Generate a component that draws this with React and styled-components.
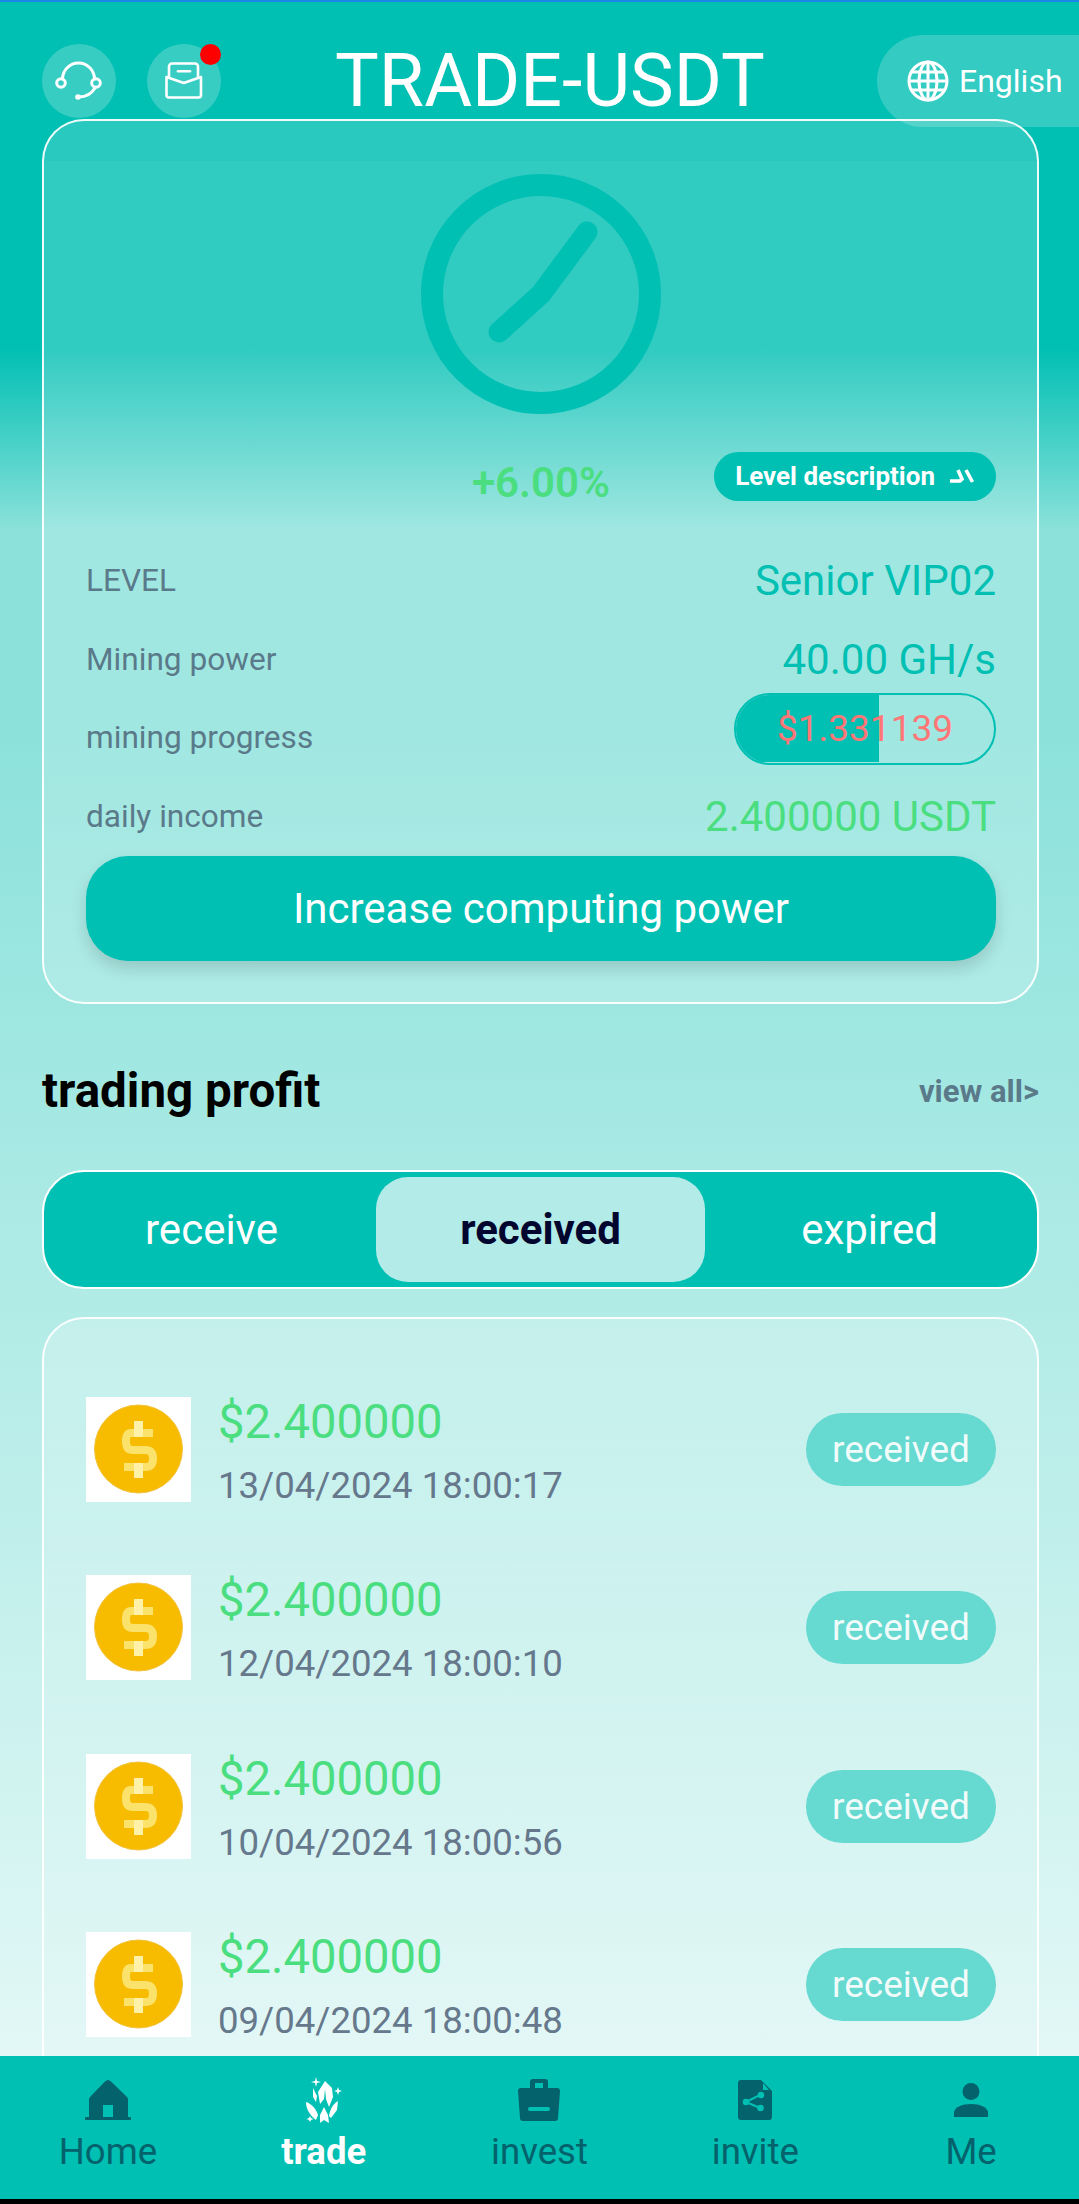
import React from "react";
import styled, { createGlobalStyle } from "styled-components";

const Global = createGlobalStyle`
  html, body { margin: 0; padding: 0; background: #000; }
  * { box-sizing: border-box; }
  body { font-family: Roboto, "Liberation Sans", sans-serif; }
`;

const Page = styled.div`
  position: relative;
  width: 1079px;
  height: 2204px;
  overflow: hidden;
  display: flex;
  flex-direction: column;
  background: linear-gradient(180deg, #00bfb3 0, #00bfb3 345px, #8ce2db 530px, #8ce2db 735px, #ffffff 2490px);
  border-top: 2px solid #1a86e8;
`;

const Scroll = styled.main`
  flex: 1;
  min-height: 0;
  overflow: hidden;
  padding: 0 40px 0 42px;
`;

const Header = styled.header`
  height: 117px;
  display: flex;
  align-items: flex-start;
  padding-top: 42px;
`;

const IconRound = styled.div`
  position: relative;
  width: 74px;
  height: 74px;
  border-radius: 50%;
  background: rgba(255, 255, 255, 0.22);
  margin-right: 31px;
  flex: none;
  svg { display: block; }
`;

const Dot = styled.span`
  position: absolute;
  top: 0;
  right: 0;
  width: 21px;
  height: 21px;
  border-radius: 50%;
  background: #ff0000;
`;

const Title = styled.h1`
  margin: -5px 0 0 83px;
  font-size: 73.5px;
  line-height: 84px;
  font-weight: 400;
  color: #fff;
  white-space: nowrap;
`;

const Lang = styled.div`
  position: absolute;
  left: 877px;
  top: 33px;
  width: 260px;
  height: 92px;
  border-radius: 46px;
  background: rgba(255, 255, 255, 0.2);
  display: flex;
  align-items: center;
  gap: 10px;
  padding-left: 30px;
  color: #fff;
  font-size: 32px;
`;

const GlassCard = styled.section`
  border: 2px solid rgba(255, 255, 255, 0.92);
  border-radius: 42px;
`;

const MineCard = styled(GlassCard)`
  height: 885px;
  padding: 53px 41px 0 42px;
  background: linear-gradient(180deg, rgba(255, 255, 255, 0.165) 0, rgba(255, 255, 255, 0.165) 40px, rgba(255, 255, 255, 0.19) 40px);
`;

const Gauge = styled.svg`
  display: block;
  width: 240px;
  height: 240px;
  margin: 0 auto;
`;

const StatLine = styled.div`
  display: grid;
  grid-template-columns: 1fr auto 1fr;
  align-items: center;
  margin-top: 38px;
  height: 49px;
`;

const Percent = styled.div`
  grid-column: 2;
  color: #4ade80;
  font-size: 42px;
  font-weight: 600;
  line-height: 49px;
  position: relative;
  top: 6px;
`;

const LevelBtn = styled.div`
  grid-column: 3;
  justify-self: end;
  display: flex;
  align-items: center;
  gap: 14px;
  height: 49px;
  padding: 0 21px 2px;
  border-radius: 25px;
  background: #00bfb3;
  color: #fff;
  font-size: 26px;
  font-weight: 700;
  white-space: nowrap;
`;

const Rows = styled.div`
  margin-top: 40px;
`;

const InfoRow = styled.div`
  height: 78.75px;
  display: flex;
  align-items: center;
  justify-content: space-between;
`;

const Label = styled.span`
  color: #5a7a8a;
  font-size: 31.6px;
`;

const Value = styled.span`
  color: ${(p) => (p.$green ? "#4ade80" : "#00bfb3")};
  font-size: 42px;
`;

const Progress = styled.div`
  position: relative;
  width: 262px;
  height: 72px;
  margin-bottom: 18px;
  border-radius: 36px;
  border: 2px solid #00bfb3;
  overflow: hidden;
  display: flex;
  align-items: center;
  justify-content: center;
  color: #ff7676;
  font-size: 37px;
`;

const ProgressFill = styled.div`
  position: absolute;
  left: 0;
  top: 0;
  bottom: 1px;
  background: #00bfb3;
`;

const ProgressText = styled.span`
  position: relative;
`;

const BigBtn = styled.div`
  height: 105px;
  border-radius: 42px;
  background: #00bfb3;
  box-shadow: 0 8px 16px rgba(0, 0, 0, 0.14);
  color: #fff;
  font-size: 42px;
  display: flex;
  align-items: center;
  justify-content: center;
`;

const SectionHead = styled.div`
  height: 166px;
  padding-top: 8px;
  display: flex;
  align-items: center;
  justify-content: space-between;
`;

const SectionTitle = styled.h2`
  margin: 0;
  font-size: 47.5px;
  font-weight: 700;
  color: #000;
`;

const ViewAll = styled.span`
  font-size: 31px;
  font-weight: 700;
  color: #5a7a8a;
`;

const Tabs = styled.div`
  height: 119px;
  border: 2px solid #fff;
  border-radius: 42px;
  background: #00bfb3;
  padding: 5px 3px;
  display: grid;
  grid-template-columns: repeat(3, 1fr);
`;

const Tab = styled.div`
  display: flex;
  align-items: center;
  justify-content: center;
  border-radius: 32px;
  font-size: 42px;
  background: ${(p) => (p.$active ? "#b2ebe7" : "transparent")};
  color: ${(p) => (p.$active ? "#02062f" : "#fff")};
  font-weight: ${(p) => (p.$active ? 700 : 400)};
`;

const ListCard = styled(GlassCard)`
  margin-top: 28px;
  padding: 78px 41px 0 42px;
  height: 900px;
  display: flex;
  flex-direction: column;
  gap: 73.3px;
  background: linear-gradient(180deg, rgba(255, 255, 255, 0.24) 0, rgba(255, 255, 255, 0.03) 740px);
`;

const Item = styled.div`
  height: 105px;
  flex: none;
  display: flex;
  align-items: center;
`;

const CoinBox = styled.svg`
  width: 105px;
  height: 105px;
  flex: none;
  display: block;
`;

const ItemText = styled.div`
  margin-left: 27px;
  flex: 1;
`;

const Amount = styled.div`
  color: #4ade80;
  font-size: 47.2px;
  line-height: 56px;
  margin-top: 3px;
`;

const Stamp = styled.div`
  color: #66788c;
  font-size: 36.6px;
  line-height: 44px;
  margin-top: 14px;
`;

const StatusPill = styled.div`
  width: 190px;
  height: 73px;
  border-radius: 37px;
  background: #66d9d1;
  color: rgba(255, 255, 255, 0.92);
  font-size: 37px;
  display: flex;
  align-items: center;
  justify-content: center;
`;

const TabBar = styled.nav`
  height: 143px;
  flex: none;
  background: #00bfb3;
  display: grid;
  grid-template-columns: repeat(5, 1fr);
`;

const NavItem = styled.div`
  display: flex;
  flex-direction: column;
  align-items: center;
  padding-top: 21px;
  color: ${(p) => (p.$active ? "#fff" : "#03626b")};
  font-weight: ${(p) => (p.$active ? 700 : 400)};
  font-size: 36.6px;
  line-height: 44px;
`;

const NavIcon = styled.div`
  height: 46px;
  display: flex;
  align-items: center;
  justify-content: center;
  svg { display: block; }
`;

const NavLabel = styled.span`
  margin-top: 7px;
`;

const BlackEdge = styled.div`
  height: 5px;
  flex: none;
  background: #000;
`;

const Headset = () => (
  <svg width="74" height="74" viewBox="0 0 74 74" fill="none" stroke="#fff" strokeWidth="3" strokeLinecap="round">
    <path d="M20.500 35A16 16 0 0 1 52.500 35" />
    <circle cx="19" cy="39" r="4.300" />
    <circle cx="54" cy="39" r="4.300" />
    <path d="M53 44C50 49 45 53 37 53" />
    <circle cx="36" cy="53" r="2.800" fill="#fff" strokeWidth="0" />
  </svg>
);

const Mail = () => (
  <svg width="74" height="74" viewBox="0 0 74 74" fill="none" stroke="#fff" strokeWidth="2.600" strokeLinecap="round" strokeLinejoin="round">
    <path d="M22 33V22.500A3 3 0 0 1 25 19.500H48A3 3 0 0 1 51 22.500V33" />
    <path d="M31 27.300H43" />
    <path d="M19.500 33V51A2.500 2.500 0 0 0 22 53.500H51.500A2.500 2.500 0 0 0 54 51V33L36.800 39Z" />
  </svg>
);

const Globe = () => (
  <svg width="42" height="42" viewBox="0 0 42 42" fill="none" stroke="#fff" strokeWidth="3">
    <circle cx="21" cy="21" r="19" />
    <ellipse cx="21" cy="21" rx="9" ry="19" />
    <path d="M21 2V40M2 21H40M4.500 12H37.500M4.500 30H37.500" />
  </svg>
);

const Chevrons = () => (
  <svg width="26" height="14" viewBox="0 0 26 14" fill="none" stroke="#fff" strokeWidth="3.600">
    <path d="M9 1L13 10L11 12H1" />
    <path d="M17 1L23.500 13" />
  </svg>
);

const Coin = () => (
  <CoinBox viewBox="0 0 105 105">
    <rect width="105" height="105" fill="#fff" />
    <circle cx="52.500" cy="52" r="44" fill="#f7bc00" stroke="#f3c23c" strokeWidth="1" />
    <path d="M67 36H45Q40 36 40 44.500Q40 53 47 53H59Q67 53 67 61.500Q67 70 59 70H38" fill="none" stroke="#fbe26a" strokeWidth="8" />
    <rect x="48" y="24" width="9" height="16" fill="#fff1a8" />
    <rect x="48" y="66" width="9" height="15" fill="#fff1a8" />
  </CoinBox>
);

const HomeIcon = () => (
  <svg width="46" height="40" viewBox="0 0 46 40" fill="#03626b">
    <path fillRule="evenodd" d="M23 0C24 0 25 .5 26 1.500L42 17C42.700 17.700 43 18.500 43 19.500V37H45A1.200 1.200 0 0 1 45 40H1A1.200 1.200 0 0 1 1 37H4V19.500C4 18.500 4.300 17.700 5 17L20 1.500C21 .5 22 0 23 0ZM18 25V37H28V25Z" />
  </svg>
);

const CaseIcon = () => (
  <svg width="42" height="42" viewBox="0 0 42 42" fill="#03626b">
    <path fillRule="evenodd" d="M12 9V3A3 3 0 0 1 15 0H27A3 3 0 0 1 30 3V9H39A3 3 0 0 1 42 12L40 39A3 3 0 0 1 37 42H5A3 3 0 0 1 2 39L0 12A3 3 0 0 1 3 9ZM17 4V9H25V4ZM12 28A2 2 0 0 0 12 32H30A2 2 0 0 0 30 28Z" />
  </svg>
);

const InviteIcon = () => (
  <svg width="34" height="40" viewBox="0 0 34 40">
    <path d="M3 0H23L34 11V37A3 3 0 0 1 31 40H3A3 3 0 0 1 0 37V3A3 3 0 0 1 3 0Z" fill="#03626b" />
    <path d="M25 3L31 10H25Z" fill="#00bfb3" />
    <g stroke="#00bfb3" strokeWidth="2" fill="#00bfb3">
      <path d="M8 22L22 15M8 22L22 28" fill="none" />
      <circle cx="8" cy="22" r="2.300" />
      <circle cx="23" cy="15" r="2.300" />
      <circle cx="22.500" cy="28" r="2.300" />
    </g>
  </svg>
);

const MeIcon = () => (
  <svg width="34" height="34" viewBox="0 0 34 34" fill="#03626b">
    <circle cx="17" cy="8.500" r="8.500" />
    <path d="M0 34V29C1 24 8 21 17 21C26 21 33 24 34 29V34Z" />
  </svg>
);

const CrystalIcon = () => (
  <svg width="36" height="46" viewBox="0 0 36 46" fill="#fff">
    <path d="M10 0L11 4L15 5L11 6L10 10L9 6L5 5L9 4Z" />
    <path d="M32 10L33 13L36 14L33 15L32 18L31 15L28 14L31 13Z" />
    <path d="M4 39L5 41L7.500 42L5 43L4 45L3 43L.5 42L3 41Z" />
    <path d="M19 4L26 11L27 20L23 30L20 22L19 12L18 22L14 27L12 15Z" />
    <path d="M7 11L11 19L10 25L7 20Z" />
    <path d="M0 25C4 26 10 31 12 38L10 43C5 39 0 33 0 25Z" />
    <path d="M32 24L31 33L25 41L23 39C24 32 27 27 32 24Z" />
    <path d="M18 30L22 38L23 46L18 43L14 46L14 38Z" />
  </svg>
);

const entries = ["13/04/2024 18:00:17", "12/04/2024 18:00:10", "10/04/2024 18:00:56", "09/04/2024 18:00:48"];

export default function App() {
  return (
    <>
      <Global />
      <Page>
        <Scroll>
          <Header>
            <IconRound><Headset /></IconRound>
            <IconRound><Mail /><Dot /></IconRound>
            <Title>TRADE-USDT</Title>
            <Lang><Globe />English</Lang>
          </Header>
          <MineCard>
            <Gauge viewBox="0 0 240 240" fill="none" stroke="#00bfb3" strokeLinecap="round">
              <circle cx="120" cy="120" r="109" strokeWidth="22" />
              <path d="M78 158L120 120L166 58" strokeWidth="21" strokeLinejoin="miter" />
            </Gauge>
            <StatLine>
              <Percent>+6.00%</Percent>
              <LevelBtn>Level description<Chevrons /></LevelBtn>
            </StatLine>
            <Rows>
              <InfoRow><Label>LEVEL</Label><Value>Senior VIP02</Value></InfoRow>
              <InfoRow><Label>Mining power</Label><Value>40.00 GH/s</Value></InfoRow>
              <InfoRow>
                <Label>mining progress</Label>
                <Progress>
                  <ProgressFill style={{ width: "55.5%" }} />
                  <ProgressText>$1.331139</ProgressText>
                </Progress>
              </InfoRow>
              <InfoRow><Label>daily income</Label><Value $green>2.400000 USDT</Value></InfoRow>
            </Rows>
            <BigBtn>Increase computing power</BigBtn>
          </MineCard>
          <SectionHead>
            <SectionTitle>trading profit</SectionTitle>
            <ViewAll>view all&gt;</ViewAll>
          </SectionHead>
          <Tabs>
            <Tab>receive</Tab>
            <Tab $active>received</Tab>
            <Tab>expired</Tab>
          </Tabs>
          <ListCard>
            {entries.map((d) => (
              <Item key={d}>
                <Coin />
                <ItemText>
                  <Amount>$2.400000</Amount>
                  <Stamp>{d}</Stamp>
                </ItemText>
                <StatusPill>received</StatusPill>
              </Item>
            ))}
          </ListCard>
        </Scroll>
        <TabBar>
          <NavItem><NavIcon><HomeIcon /></NavIcon><NavLabel>Home</NavLabel></NavItem>
          <NavItem $active><NavIcon><CrystalIcon /></NavIcon><NavLabel>trade</NavLabel></NavItem>
          <NavItem><NavIcon><CaseIcon /></NavIcon><NavLabel>invest</NavLabel></NavItem>
          <NavItem><NavIcon><InviteIcon /></NavIcon><NavLabel>invite</NavLabel></NavItem>
          <NavItem><NavIcon><MeIcon /></NavIcon><NavLabel>Me</NavLabel></NavItem>
        </TabBar>
        <BlackEdge />
      </Page>
    </>
  );
}
